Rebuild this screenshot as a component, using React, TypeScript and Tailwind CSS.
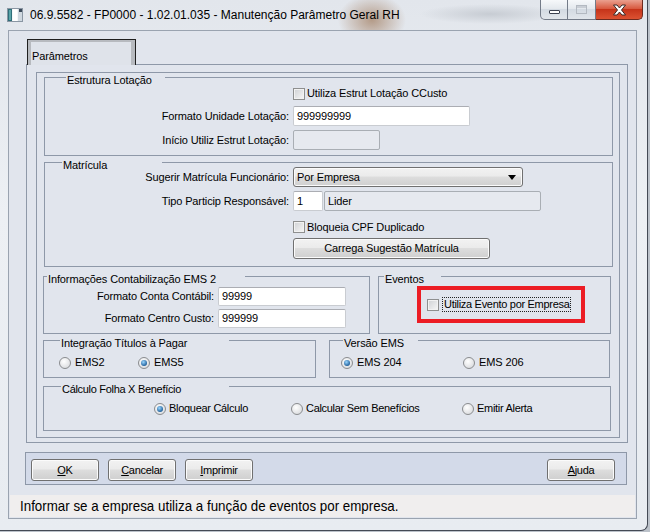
import React from 'react'

const panelBg = 'bg-[#e1e5ed]'

const Checkbox = () => (
  <span className="block w-[12px] h-[12px] shrink-0 border border-[#8e8f8f] bg-[linear-gradient(135deg,#cfd1d4,#f7f7f7)] shadow-[inset_0_0_0_1px_#f2f2f2]" />
)

const Radio = ({ on }: { on?: boolean }) => (
  <span className="flex items-center justify-center w-[12px] h-[12px] shrink-0 rounded-full border border-[#8a8c8f] bg-[radial-gradient(circle_at_40%_35%,#ffffff,#d2d4d7)]">
    {on && <span className="block w-[6px] h-[6px] rounded-full bg-[radial-gradient(circle_at_40%_35%,#9ad6ff,#1c5c98_75%)]" />}
  </span>
)

const Input = ({ value, className }: { value: string; className: string }) => (
  <div className={`flex items-center pl-[3px] bg-white border border-[#c9ccd1] border-t-[#abadb3] rounded-[2px] ${className}`}>
    {value}
  </div>
)

const Disabled = ({ value, className }: { value?: string; className: string }) => (
  <div className={`flex items-center pl-[3px] bg-[#e6e9ef] border border-[#a9aeb4] rounded-[2px] ${className}`}>
    {value}
  </div>
)

const Button = ({ children, className }: { children: React.ReactNode; className: string }) => (
  <div
    className={`flex items-center justify-center border border-[#707070] rounded-[3px] bg-[linear-gradient(#f2f2f2_0%,#ebebeb_45%,#dddddd_50%,#cfcfcf_100%)] shadow-[inset_0_0_0_1px_#fbfbfb] ${className}`}
  >
    {children}
  </div>
)

type GroupProps = {
  title: string
  titleClass: string
  className: string
  children: React.ReactNode
}

const Group = ({ title, titleClass, className, children }: GroupProps) => (
  <div className={`border border-[#8e98a8] ${className}`}>
    <div className={`h-[13px] leading-[13px] -mt-[4px] -mb-[9px] pl-[1px] whitespace-nowrap ${panelBg} ${titleClass}`}>
      {title}
    </div>
    {children}
  </div>
)

const WindowControls = () => (
  <div className="ml-auto mr-[4px] flex h-[20px]">
    <div className="w-[28px] h-full flex items-center justify-center border border-t-0 border-[#737b88] rounded-bl-[5px] bg-[linear-gradient(#f6f8fa,#e2e7ec_50%,#d3dae2_50%,#e1e6eb)]">
      <span className="block mt-[5px] w-[11px] h-[4px] bg-white border border-[#3c4250] rounded-[1px]" />
    </div>
    <div className="w-[28px] h-full flex items-center justify-center border border-t-0 border-l-0 border-[#737b88] bg-[linear-gradient(#f6f8fa,#e2e7ec_50%,#d3dae2_50%,#e1e6eb)]">
      <span className="block w-[11px] h-[9px] border border-[#b3b9c1] shadow-[inset_0_2px_0_#c9ced5]" />
    </div>
    <div className="w-[47px] h-full flex items-center justify-center border border-t-0 border-l-0 border-[#6e2a1e] rounded-br-[5px] bg-[linear-gradient(#eaa08f,#d85a40_45%,#c6341a_50%,#dc5232)]">
      <svg width="15" height="12" viewBox="0 0 15 12">
        <path
          d="M1.5 1 H5 L7.5 4 L10 1 H13.5 L9.5 6 L13.5 11 H10 L7.5 8 L5 11 H1.5 L5.5 6 Z"
          fill="#ffffff"
          stroke="#3a2a28"
          strokeWidth="1"
          strokeLinejoin="round"
        />
      </svg>
    </div>
  </div>
)

const TitleIcon = () => (
  <svg width="16" height="14" viewBox="0 0 16 14" className="shrink-0">
    <rect x="0.5" y="0.5" width="15" height="13" fill="#f4f6f8" stroke="#8a96a3" />
    <rect x="1" y="1" width="4" height="12" fill="#2f6f7a" />
    <rect x="2" y="2" width="2" height="10" fill="#5aa3a8" />
    <rect x="6" y="1" width="4" height="12" fill="#ffffff" />
    <rect x="11" y="1" width="4" height="12" fill="#cfd8e0" />
    <rect x="12" y="1" width="3" height="3" fill="#3b4a5a" />
  </svg>
)

export default function App() {
  return (
    <div className="w-[650px] h-[532px] overflow-hidden bg-[#bcc2ca] font-['Liberation_Sans',Arial,sans-serif] text-[11px] tracking-[-0.12px] text-black">
      <div className="w-[648px] h-[531px] flex flex-col border-r border-b border-[#444a55] rounded-br-[7px] bg-[radial-gradient(ellipse_34px_26px_at_372px_20px,#b49b88,transparent),radial-gradient(ellipse_70px_10px_at_490px_14px,#c7ccd3,transparent),linear-gradient(#e2e6ec,#edf0f4_40%,#e8ecf1)]">
        {/* title bar */}
        <div className="h-[30px] flex items-start">
          <div className="ml-[7px] mt-[8px]">
            <TitleIcon />
          </div>
          <div className="ml-[7px] mt-[8px] text-[12px] leading-[15px] tracking-normal whitespace-nowrap">
            06.9.5582 - FP0000 - 1.02.01.035 - Manutenção Parâmetro Geral RH
          </div>
          <WindowControls />
        </div>

        {/* client area */}
        <div className={`ml-[8px] w-[629px] h-[489px] flex flex-col border border-[#9aa3b0] ${panelBg}`}>
          <div className="pl-[17px] pt-[8px] flex flex-col">
            {/* tab header */}
            <div className="relative z-10 ml-[1px] w-[109px] h-[26px] flex border-t border-l border-r border-[#1f1f1f] bg-[#b7babf]">
              <div className="ml-[3px] mr-[4px] mt-[2px] flex-1 flex items-start pt-[6px] pl-[1px] bg-[#dfe3ea]">
                Parâmetros
              </div>
            </div>

            {/* tab panel */}
            <div className="-mt-[1px] w-[602px] h-[379px] border border-[#8e98a8] pl-[9px] pr-[7px] pt-[7px]">
              <div className="h-[366px] flex flex-col border border-[#8e98a8]">
                <Group title="Estrutura Lotação" titleClass="ml-[21px] w-[99px]" className="ml-[7px] mt-[4px] w-[569px] h-[79px]">
                  <div className="pt-[9px] flex flex-col">
                    <div className="h-[13px] pl-[248px] flex items-center gap-[2px]">
                      <Checkbox />
                      <span>Utiliza Estrut Lotação CCusto</span>
                    </div>
                    <div className="mt-[6px] h-[20px] flex items-center">
                      <span className="w-[244px] text-right">Formato Unidade Lotação:</span>
                      <Input value="999999999" className="ml-[4px] w-[177px] h-[20px]" />
                    </div>
                    <div className="mt-[4px] h-[20px] flex items-center">
                      <span className="w-[244px] text-right">Início Utiliz Estrut Lotação:</span>
                      <Disabled className="ml-[4px] w-[87px] h-[20px]" />
                    </div>
                  </div>
                </Group>

                <Group title="Matrícula" titleClass="ml-[17px] w-[100px]" className="ml-[7px] mt-[6px] w-[569px] h-[105px]">
                  <div className="pt-[4px] flex flex-col">
                    <div className="h-[20px] flex items-center">
                      <span className="w-[244px] text-right">Sugerir Matrícula Funcionário:</span>
                      <div className="ml-[4px] w-[230px] h-[20px] flex items-center pl-[3px] pr-[6px] border border-[#707070] rounded-[3px] bg-[linear-gradient(#f2f2f2_0%,#ebebeb_45%,#dddddd_50%,#cfcfcf_100%)] shadow-[inset_0_0_0_1px_#fbfbfb]">
                        <span className="flex-1">Por Empresa</span>
                        <svg width="8" height="5" viewBox="0 0 8 5">
                          <path d="M0 0 H8 L4 5 Z" fill="#000" />
                        </svg>
                      </div>
                    </div>
                    <div className="mt-[4px] h-[20px] flex items-center">
                      <span className="w-[244px] text-right">Tipo Particip Responsável:</span>
                      <Input value="1" className="ml-[4px] w-[30px] h-[20px]" />
                      <Disabled value="Lider" className="ml-[1px] w-[217px] h-[20px]" />
                    </div>
                    <div className="mt-[9px] h-[14px] pl-[248px] flex items-center gap-[2px]">
                      <Checkbox />
                      <span>Bloqueia CPF Duplicado</span>
                    </div>
                    <div className="mt-[4px] pl-[248px] flex">
                      <Button className="w-[197px] h-[21px]">Carrega Sugestão Matrícula</Button>
                    </div>
                  </div>
                </Group>

                <div className="ml-[6px] mt-[9px] flex gap-[8px]">
                  <Group title="Informações Contabilização EMS 2" titleClass="ml-[3px] w-[198px]" className="w-[327px] h-[58px]">
                    <div className="pt-[10px] flex flex-col">
                      <div className="h-[19px] flex items-center">
                        <span className="w-[170px] text-right">Formato Conta Contábil:</span>
                        <Input value="99999" className="ml-[4px] w-[128px] h-[19px]" />
                      </div>
                      <div className="mt-[3px] h-[19px] flex items-center">
                        <span className="w-[170px] text-right">Formato Centro Custo:</span>
                        <Input value="999999" className="ml-[4px] w-[128px] h-[19px]" />
                      </div>
                    </div>
                  </Group>
                  <Group title="Eventos" titleClass="ml-[5px] w-[57px]" className="w-[233px] h-[58px]">
                    <div className="pt-[9px] pl-[38px]">
                      <div className="w-[168px] h-[37px] flex items-center pl-[6px] border-[4px] border-[#ec1c24]">
                        <Checkbox />
                        <span className="ml-[3px] px-[1px] leading-[13px] tracking-[-0.3px] whitespace-nowrap border border-dotted border-[#222]">
                          Utiliza Evento por Empresa
                        </span>
                      </div>
                    </div>
                  </Group>
                </div>

                <div className="ml-[6px] mt-[6px] flex gap-[13px]">
                  <Group title="Integração Títulos à Pagar" titleClass="ml-[16px] w-[169px]" className="w-[273px] h-[38px]">
                    <div className="pt-[15px] pl-[15px] h-[28px] flex items-center">
                      <div className="w-[79px] flex items-center gap-[4px]">
                        <Radio />
                        <span>EMS2</span>
                      </div>
                      <div className="flex items-center gap-[4px]">
                        <Radio on />
                        <span>EMS5</span>
                      </div>
                    </div>
                  </Group>
                  <Group title="Versão EMS" titleClass="ml-[13px] w-[75px]" className="w-[281px] h-[38px]">
                    <div className="pt-[15px] pl-[11px] h-[28px] flex items-center">
                      <div className="w-[122px] flex items-center gap-[4px]">
                        <Radio on />
                        <span>EMS 204</span>
                      </div>
                      <div className="flex items-center gap-[4px]">
                        <Radio />
                        <span>EMS 206</span>
                      </div>
                    </div>
                  </Group>
                </div>

                <Group title="Cálculo Folha X Benefício" titleClass="ml-[17px] w-[168px] tracking-[-0.3px]" className="ml-[6px] mt-[8px] w-[568px] h-[45px]">
                  <div className="pt-[15px] pl-[110px] h-[28px] flex items-center tracking-[-0.3px]">
                    <div className="w-[137px] flex items-center gap-[3px]">
                      <Radio on />
                      <span>Bloquear Cálculo</span>
                    </div>
                    <div className="w-[171px] flex items-center gap-[3px]">
                      <Radio />
                      <span>Calcular Sem Benefícios</span>
                    </div>
                    <div className="flex items-center gap-[3px]">
                      <Radio />
                      <span>Emitir Alerta</span>
                    </div>
                  </div>
                </Group>
              </div>
            </div>
          </div>

          {/* button bar */}
          <div className="ml-[16px] mt-[9px] w-[602px] h-[33px] flex items-start pt-[6px] pl-[5px] pr-[11px] gap-[9px] border border-[#8e98a8] bg-[#d3dae9] tracking-[-0.3px]">
            <Button className="w-[68px] h-[22px]">
              <span><u>O</u>K</span>
            </Button>
            <Button className="w-[68px] h-[22px]">
              <span><u>C</u>ancelar</span>
            </Button>
            <Button className="w-[68px] h-[22px]">
              <span><u>I</u>mprimir</span>
            </Button>
            <Button className="ml-auto w-[68px] h-[22px]">
              <span><u>A</u>juda</span>
            </Button>
          </div>

          {/* status bar */}
          <div className="ml-[1px] mr-[1px] mt-[10px] h-[22px] flex items-center pl-[10px] bg-[#f0eeee] overflow-hidden">
            <span className="block whitespace-nowrap text-[15px] leading-[18px] tracking-normal origin-left scale-x-[0.89]">
              Informar se a empresa utiliza a função de eventos por empresa.
            </span>
          </div>
        </div>
      </div>
    </div>
  )
}
